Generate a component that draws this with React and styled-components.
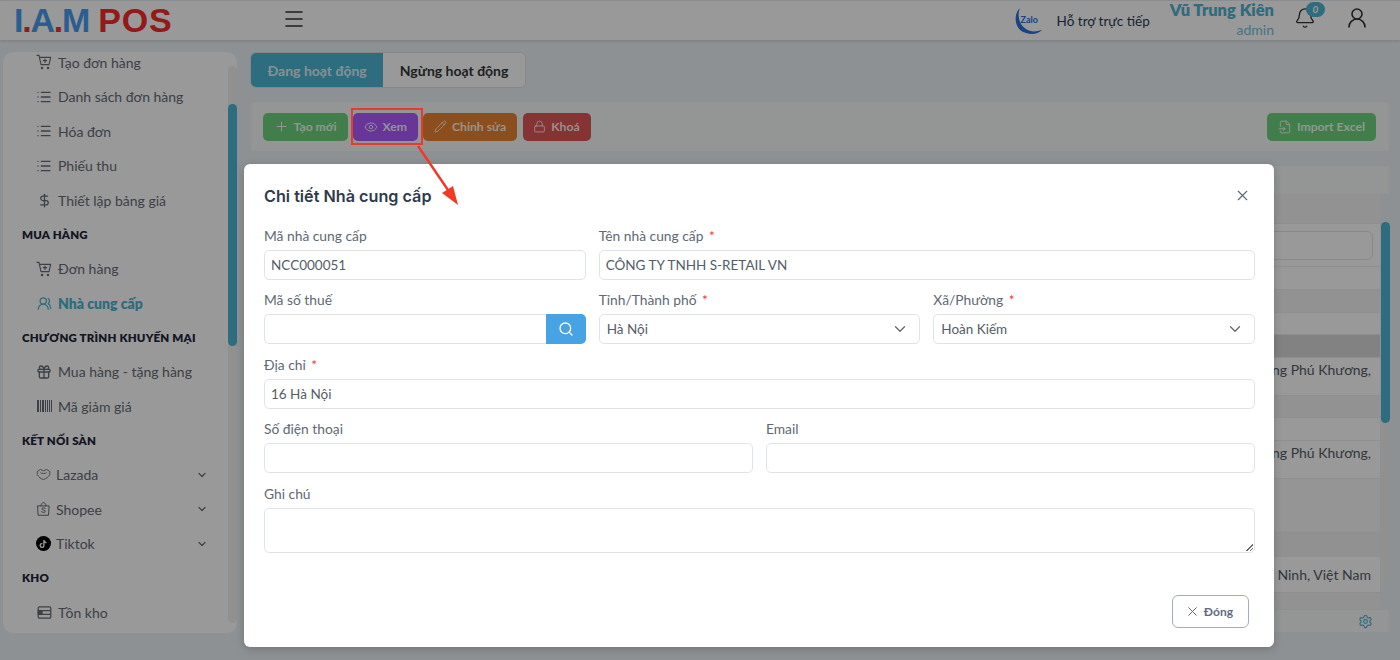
import styled, { createGlobalStyle } from "styled-components";
import {
  Bell,
  ChevronDown,
  DollarSign,
  Eye,
  FileInput,
  Gift,
  List,
  Lock,
  Menu,
  Pencil,
  Plus,
  Search,
  Settings,
  UserRound,
  UsersRound,
  X,
} from "lucide-react";
import { FaTiktok } from "react-icons/fa";

const font = `"Lato", "Noto Sans", sans-serif`;
const teal = "#4db4d2";

function CartIcon() {
  return (
    <svg width="16" height="16" viewBox="0 0 24 24" fill="none" stroke="currentColor" strokeWidth="1.7" strokeLinecap="round" strokeLinejoin="round">
      <circle cx="9" cy="21" r="1" />
      <circle cx="18" cy="21" r="1" />
      <path d="M1.5 2h3l3 14h12l2.5-11H5.5" />
      <path d="M13.5 7.5v5M11 10h5" />
    </svg>
  );
}

function LazadaIcon() {
  return (
    <svg width="15" height="15" viewBox="0 0 24 24" fill="none" stroke="currentColor" strokeWidth="1.4" strokeLinejoin="round">
      <path d="M2 7l5-3 5 2 5-2 5 3v5c-2 4-6 7-10 8-4-1-8-4-10-8z" />
      <path d="M7 9c2 2 8 2 10 0" />
    </svg>
  );
}

function ShopeeIcon() {
  return (
    <svg width="15" height="16" viewBox="0 0 24 24" fill="none" stroke="currentColor" strokeWidth="1.6" strokeLinecap="round" strokeLinejoin="round">
      <path d="M3 7h18l-1 15H4z" />
      <path d="M8 7c0-7 8-7 8 0" />
      <path d="M15 11c-1.500-1.500-6-1.200-5.500 1.200.4 2 5.500 1.300 5.300 3.600-.2 2.200-4.300 2.200-6 .5" />
    </svg>
  );
}

function StockIcon() {
  return (
    <svg width="15" height="15" viewBox="0 0 24 24" fill="none" stroke="currentColor" strokeWidth="2">
      <rect x="2" y="3" width="20" height="18" rx="2" />
      <path d="M2 9h20M2 15h20" />
      <rect x="2" y="9" width="6" height="6" fill="currentColor" />
    </svg>
  );
}

function BarcodeIcon() {
  return (
    <svg width="15" height="14" viewBox="0 0 15 14" fill="currentColor">
      <rect x="0" y="1" width="2" height="12" />
      <rect x="3" y="1" width="1" height="12" />
      <rect x="5" y="1" width="2" height="12" />
      <rect x="8" y="1" width="1" height="12" />
      <rect x="10" y="1" width="1" height="12" />
      <rect x="12" y="1" width="1" height="12" />
      <rect x="14" y="1" width="1" height="12" />
    </svg>
  );
}

const sections = [
  {
    items: [
      { icon: <CartIcon />, label: "Tạo đơn hàng" },
      { icon: <List size={16} />, label: "Danh sách đơn hàng" },
      { icon: <List size={16} />, label: "Hóa đơn" },
      { icon: <List size={16} />, label: "Phiếu thu" },
      { icon: <DollarSign size={15} />, label: "Thiết lập bảng giá" },
    ],
  },
  {
    title: "MUA HÀNG",
    items: [
      { icon: <CartIcon />, label: "Đơn hàng" },
      { icon: <UsersRound size={15} />, label: "Nhà cung cấp", active: true },
    ],
  },
  {
    title: "CHƯƠNG TRÌNH KHUYẾN MẠI",
    items: [
      { icon: <Gift size={16} />, label: "Mua hàng - tặng hàng" },
      { icon: <BarcodeIcon />, label: "Mã giảm giá" },
    ],
  },
  {
    title: "KẾT NỐI SÀN",
    items: [
      { icon: <LazadaIcon />, label: "Lazada", more: true },
      { icon: <ShopeeIcon />, label: "Shopee", more: true },
      { icon: <TiktokBadge><FaTiktok size={8} /></TiktokBadge>, label: "Tiktok", more: true },
    ],
  },
  {
    title: "KHO",
    items: [{ icon: <StockIcon />, label: "Tồn kho" }],
  },
];

export default function App() {
  return (
    <>
      <GlobalStyle />
      <Page>
        <Header>
          <Logo>
            <LogoBlue>
              I<LogoDot>.</LogoDot>A<LogoDot>.</LogoDot>M
            </LogoBlue>
            <LogoRed>POS</LogoRed>
          </Logo>
          <MenuButton>
            <Menu size={24} strokeWidth={1.6} />
          </MenuButton>
          <HeaderRight>
            <Support>
              <ZaloMark>
                <svg width="30" height="30" viewBox="0 0 30 30" fill="#2f6fd8">
                  <path d="M8 2C1 8 2 24 14 27c6 2 12 1 16-3-6 2-12 2-16-1C7 19 5 9 8 2z" />
                </svg>
                <ZaloText>Zalo</ZaloText>
              </ZaloMark>
              <span>Hỗ trợ trực tiếp</span>
            </Support>
            <UserBlock>
              <UserName>Vũ Trung Kiên</UserName>
              <UserRole>admin</UserRole>
            </UserBlock>
            <BellWrap>
              <Bell size={22} strokeWidth={1.5} />
              <BellBadge>0</BellBadge>
            </BellWrap>
            <UserRound size={24} strokeWidth={1.6} />
          </HeaderRight>
        </Header>

        <Body>
          <Sidebar>
            <SideScroll>
              {sections.map((section, i) => (
                <div key={i}>
                  {section.title && <SectionTitle>{section.title}</SectionTitle>}
                  {section.items.map((item) => (
                    <SideItem key={item.label} $active={item.active} $more={item.more}>
                      <SideIcon $more={item.more}>{item.icon}</SideIcon>
                      <SideLabel>{item.label}</SideLabel>
                      {item.more && <ChevronDown size={12} strokeWidth={2.4} />}
                    </SideItem>
                  ))}
                </div>
              ))}
            </SideScroll>
            <ScrollTrack $mt={14} $h={557}>
              <ScrollThumb $top={38} $height={242} />
            </ScrollTrack>
          </Sidebar>

          <Content>
            <Tabs>
              <Tab $active>Đang hoạt động</Tab>
              <Tab>Ngừng hoạt động</Tab>
            </Tabs>
            <Toolbar>
              <ActionButton $bg="#6fd27e">
                <Plus size={15} strokeWidth={1.6} />
                Tạo mới
              </ActionButton>
              <ActionButton $bg="#ae59ff">
                <Eye size={14} strokeWidth={1.6} />
                Xem
              </ActionButton>
              <ActionButton $bg="#e98230">
                <Pencil size={13} strokeWidth={1.6} />
                Chỉnh sửa
              </ActionButton>
              <ActionButton $bg="#df5555">
                <Lock size={13} strokeWidth={1.6} />
                Khoá
              </ActionButton>
              <ToolbarGap />
              <ActionButton $bg="#6fd27e">
                <FileInput size={14} strokeWidth={1.6} />
                Import Excel
              </ActionButton>
            </Toolbar>
            <TableArea>
              <TableBand />
              <TableWrap>
                <TablePanel>
                  <Row $h={30} $shade="#f4f4f4" />
                  <FilterRow>
                    <FilterBox />
                  </FilterRow>
                  <Row $h={23} />
                  <Row $h={23} $shade="#f4f4f4" />
                  <Row $h={22} />
                  <Row $h={23} $shade="#d9d9d9" />
                  <TextRow $h={38} $pt={2}>Phường Phú Khương,</TextRow>
                  <Row $h={22} $shade="#f4f4f4" />
                  <Row $h={23} />
                  <TextRow $h={38} $pt={2}>Phường Phú Khương,</TextRow>
                  <Row $h={54} $shade="#f9f9f9" />
                  <Row $h={24} $shade="#f2f2f2" />
                  <TextRow $h={36} $pt={8}>Tây Ninh, Việt Nam</TextRow>
                  <Row $h={17} $shade="#f4f4f4" />
                </TablePanel>
                <ScrollTrack $mt={28} $h={359}>
                  <ScrollThumb $top={0} $height={201} />
                </ScrollTrack>
              </TableWrap>
              <PagerBar>
                <Settings size={15} strokeWidth={1.8} />
              </PagerBar>
            </TableArea>
          </Content>
        </Body>

        <Overlay />

        <Highlight />
        <Arrow viewBox="0 0 60 80" width="60" height="80">
          <line x1="6" y1="2" x2="36" y2="46" stroke="#ef3a26" strokeWidth="2.4" />
          <polygon points="46,61 30,49 41,42" fill="#ef3a26" />
        </Arrow>

        <Modal>
          <ModalHead>
            <ModalTitle>Chi tiết Nhà cung cấp</ModalTitle>
            <X size={17} strokeWidth={1.6} />
          </ModalHead>
          <FormGrid>
            <Field $span={2}>
              <FieldLabel>Mã nhà cung cấp</FieldLabel>
              <InputBox>NCC000051</InputBox>
            </Field>
            <Field $span={4}>
              <FieldLabel>
                Tên nhà cung cấp <Required>*</Required>
              </FieldLabel>
              <InputBox>CÔNG TY TNHH S-RETAIL VN</InputBox>
            </Field>

            <Field $span={2}>
              <FieldLabel>Mã số thuế</FieldLabel>
              <SearchBox>
                <SearchInput />
                <SearchButton>
                  <Search size={16} strokeWidth={2} />
                </SearchButton>
              </SearchBox>
            </Field>
            <Field $span={2}>
              <FieldLabel>
                Tỉnh/Thành phố <Required>*</Required>
              </FieldLabel>
              <SelectBox>
                Hà Nội
                <ChevronDown size={18} strokeWidth={1.6} />
              </SelectBox>
            </Field>
            <Field $span={2}>
              <FieldLabel>
                Xã/Phường <Required>*</Required>
              </FieldLabel>
              <SelectBox>
                Hoàn Kiếm
                <ChevronDown size={18} strokeWidth={1.6} />
              </SelectBox>
            </Field>

            <Field $span={6}>
              <FieldLabel>
                Địa chỉ <Required>*</Required>
              </FieldLabel>
              <InputBox>16 Hà Nội</InputBox>
            </Field>

            <Field $span={3}>
              <FieldLabel>Số điện thoại</FieldLabel>
              <InputBox />
            </Field>
            <Field $span={3}>
              <FieldLabel>Email</FieldLabel>
              <InputBox />
            </Field>

            <Field $span={6}>
              <FieldLabel>Ghi chú</FieldLabel>
              <NoteBox />
            </Field>
          </FormGrid>
          <ModalFoot>
            <CloseButton>
              <X size={15} strokeWidth={1.6} />
              Đóng
            </CloseButton>
          </ModalFoot>
        </Modal>
      </Page>
    </>
  );
}

function TiktokBadge({ children }) {
  return <TiktokCircle>{children}</TiktokCircle>;
}

const GlobalStyle = createGlobalStyle`
  * {
    box-sizing: border-box;
  }

  body {
    margin: 0;
    font-family: ${font};
    overflow: hidden;
  }
`;

const Page = styled.div`
  position: relative;
  width: 1400px;
  height: 660px;
  background: #edf2f6;
  overflow: hidden;
`;

const Header = styled.header`
  height: 39px;
  margin-top: 1px;
  background: #fff;
  display: flex;
  align-items: center;
  padding: 0 31px 0 14px;
  box-shadow: 0 1px 3px rgba(0, 0, 0, 0.15);
`;

const Logo = styled.div`
  display: flex;
  gap: 9px;
  width: 259px;
  font-family: "Liberation Sans", sans-serif;
  font-size: 34px;
  line-height: 39px;
  font-weight: 700;
`;

const LogoBlue = styled.span`
  color: #4a9cf0;
  letter-spacing: -1.2px;
`;

const LogoDot = styled.span`
  color: #f52c2c;
`;

const LogoRed = styled.span`
  color: #f52c2c;
  letter-spacing: 0.8px;
`;

const MenuButton = styled.div`
  display: flex;
  color: #333;
  margin: 0 0 3px 9px;
`;

const HeaderRight = styled.div`
  margin-left: auto;
  display: flex;
  align-items: center;
  color: #333;

  > svg {
    margin-bottom: 5px;
  }
`;

const Support = styled.div`
  display: flex;
  align-items: center;
  gap: 15px;
  font-size: 13.500px;
  color: #2b3a55;
  margin-right: 20px;
`;

const ZaloMark = styled.div`
  position: relative;
  width: 30px;
  height: 30px;
`;

const ZaloText = styled.span`
  position: absolute;
  left: 9px;
  top: 8px;
  font-size: 9px;
  font-weight: 700;
  color: #2f6fd8;
`;

const UserBlock = styled.div`
  display: flex;
  flex-direction: column;
  align-items: flex-end;
  margin-right: 20px;
`;

const UserName = styled.div`
  font-size: 16.500px;
  line-height: 19px;
  font-weight: 800;
  color: ${teal};
`;

const UserRole = styled.div`
  font-size: 14px;
  line-height: 20px;
  color: #6fc3dc;
`;

const BellWrap = styled.div`
  position: relative;
  display: flex;
  margin: 0 29px 5px 0;
`;

const BellBadge = styled.span`
  position: absolute;
  top: -5px;
  right: -9px;
  width: 19px;
  height: 15px;
  border-radius: 8px;
  background: ${teal};
  color: #fff;
  font-size: 10px;
  font-style: italic;
  font-weight: 700;
  line-height: 15px;
  text-align: center;
`;

const Body = styled.div`
  display: flex;
  align-items: flex-start;
  padding: 12px 10px 0 3px;
  gap: 13px;
`;

const Sidebar = styled.aside`
  position: relative;
  display: flex;
  flex: 0 0 234px;
  height: 581px;
  background: #fff;
  border-radius: 10px;
  overflow: hidden;
`;

const SideScroll = styled.div`
  flex: 1;
  margin-top: -7px;
  padding-left: 19px;
`;

const SectionTitle = styled.div`
  height: 34px;
  line-height: 34px;
  font-size: 11.500px;
  font-weight: 800;
  letter-spacing: 0.2px;
  color: #24263a;
  white-space: nowrap;
`;

const SideItem = styled.div`
  display: flex;
  align-items: center;
  height: 34.500px;
  padding-left: ${(p) => (p.$more ? "13px" : "14px")};
  padding-right: 20px;
  color: ${(p) => (p.$active ? teal : "#666c75")};
  font-weight: ${(p) => (p.$active ? 800 : 400)};
`;

const SideIcon = styled.span`
  display: flex;
  justify-content: center;
  align-items: center;
  width: 16px;
  margin-right: ${(p) => (p.$more ? "5px" : "6px")};
`;

const SideLabel = styled.span`
  flex: 1;
  font-size: 14px;
  white-space: nowrap;
`;

const TiktokCircle = styled.span`
  display: flex;
  align-items: center;
  justify-content: center;
  width: 15px;
  height: 15px;
  border-radius: 50%;
  background: #000;
  color: #fff;
`;

const ScrollTrack = styled.div`
  position: relative;
  flex: 0 0 9px;
  margin-top: ${(p) => p.$mt}px;
  height: ${(p) => p.$h}px;
  background: #f0f0f0;
  border-radius: 5px;
`;

const ScrollThumb = styled.div`
  position: absolute;
  left: 0;
  right: 0;
  top: ${(p) => p.$top}px;
  height: ${(p) => p.$height}px;
  background: #4db5d4;
  border-radius: 5px;
`;

const Content = styled.main`
  flex: 1;
  min-width: 0;
  display: flex;
  flex-direction: column;
`;

const Tabs = styled.div`
  display: flex;
  align-self: flex-start;
  height: 36px;
  background: #fff;
  border-radius: 6px;
  border: 1px solid #e0e0e0;
  overflow: hidden;
`;

const Tab = styled.div`
  display: flex;
  align-items: center;
  padding: 0 16.500px;
  font-size: 14px;
  font-weight: 700;
  color: ${(p) => (p.$active ? "#dff1f6" : "#33363d")};
  background: ${(p) => (p.$active ? "#4db5d4" : "#fff")};
`;

const Toolbar = styled.div`
  display: flex;
  align-items: center;
  gap: 5.500px;
  height: 49px;
  margin: 14px 1px 0 1px;
  padding: 0 13px 0 12px;
  background: #f7f8f9;
  border-radius: 5px;
`;

const ToolbarGap = styled.div`
  flex: 1;
`;

const ActionButton = styled.div`
  display: flex;
  align-items: center;
  gap: 5px;
  height: 28px;
  padding: 0 11px 0 10.500px;
  border-radius: 5px;
  background: ${(p) => p.$bg};
  color: rgba(255, 255, 255, 0.92);
  font-size: 12.200px;
  font-weight: 700;
`;

const TableArea = styled.div`
  display: flex;
  flex-direction: column;
  margin-top: 15px;
  margin-left: 1px;
`;

const TableBand = styled.div`
  height: 28px;
  margin-right: 1px;
  background: #f7f8f9;
`;

const TableWrap = styled.div`
  display: flex;
  height: 416px;
  overflow: hidden;
`;

const TablePanel = styled.div`
  flex: 1;
  margin-right: 1px;
  background: #fff;
`;

const Row = styled.div`
  height: ${(p) => p.$h}px;
  background: ${(p) => p.$shade || "#fff"};
  border-bottom: 1px solid #eeeeee;
`;

const TextRow = styled(Row)`
  display: flex;
  justify-content: flex-end;
  padding: ${(p) => p.$pt}px 9px 0 0;
  font-size: 14px;
  line-height: 20px;
  color: #555c66;
  white-space: nowrap;
`;

const FilterRow = styled.div`
  height: 43px;
  padding: 7px 7px 0 0;
  border-bottom: 1px solid #eeeeee;
  background: #fff;
`;

const FilterBox = styled.div`
  height: 29px;
  border: 1px solid #dfe3e8;
  border-radius: 6px;
`;

const PagerBar = styled.div`
  display: flex;
  justify-content: flex-end;
  align-items: center;
  height: 22px;
  margin-right: 1px;
  padding-right: 16px;
  background: #f7f8f9;
  color: #4db5d4;
`;

const Overlay = styled.div`
  position: absolute;
  inset: 0;
  background: rgba(0, 0, 0, 0.4);
`;

const Highlight = styled.div`
  position: absolute;
  left: 351px;
  top: 108px;
  width: 72px;
  height: 37px;
  border: 2px solid #e63b2e;
`;

const Arrow = styled.svg`
  position: absolute;
  left: 412px;
  top: 144px;
  z-index: 2;
`;

const Modal = styled.div`
  position: absolute;
  left: 244px;
  top: 164px;
  width: 1030px;
  height: 483px;
  display: flex;
  flex-direction: column;
  padding: 0 19px 0 20px;
  background: #fff;
  border-radius: 6px;
  box-shadow: 0 2px 8px rgba(0, 0, 0, 0.2);
`;

const ModalHead = styled.div`
  display: flex;
  align-items: center;
  justify-content: space-between;
  flex: 0 0 62.500px;
  padding: 1px 4px 0 0;
  color: #5c6470;
`;

const ModalTitle = styled.h2`
  margin: 0;
  font-family: "Inter", sans-serif;
  font-size: 16.200px;
  font-weight: 600;
  color: #2f3a4c;
`;

const FormGrid = styled.div`
  display: grid;
  grid-template-columns: repeat(6, 1fr);
  column-gap: 13px;
  row-gap: 11.500px;
`;

const Field = styled.div`
  grid-column: span ${(p) => p.$span};
  display: flex;
  flex-direction: column;
`;

const FieldLabel = styled.label`
  height: 23px;
  font-size: 13.800px;
  line-height: 18px;
  color: #616873;
`;

const Required = styled.span`
  color: #e53935;
  margin-left: 2px;
`;

const InputBox = styled.div`
  display: flex;
  align-items: center;
  height: 30px;
  padding: 0 6px;
  border: 1px solid #dfe3ea;
  border-radius: 5px;
  font-size: 13.500px;
  color: #555c66;
`;

const SearchBox = styled.div`
  display: flex;
  height: 30px;
`;

const SearchInput = styled.div`
  flex: 1;
  border: 1px solid #dfe3ea;
  border-right: 0;
  border-radius: 5px 0 0 5px;
`;

const SearchButton = styled.div`
  display: flex;
  align-items: center;
  justify-content: center;
  width: 40px;
  background: #48a3e4;
  color: #fff;
  border-radius: 0 5px 5px 0;
`;

const SelectBox = styled(InputBox)`
  justify-content: space-between;
  padding: 0 10px 0 7px;

  svg {
    color: #5c6470;
  }
`;

const NoteBox = styled(InputBox)`
  position: relative;
  height: 45px;

  &::after {
    content: "";
    position: absolute;
    right: 1px;
    bottom: 1px;
    width: 7px;
    height: 7px;
    background: linear-gradient(135deg, transparent 50%, #666 50%, #666 60%, transparent 60%, transparent 75%, #666 75%, #666 85%, transparent 85%);
  }
`;

const ModalFoot = styled.div`
  display: flex;
  justify-content: flex-end;
  margin-top: auto;
  padding: 0 6px 19px 0;
`;

const CloseButton = styled.div`
  display: flex;
  align-items: center;
  gap: 4px;
  height: 33px;
  padding: 0 15px 0 12px;
  border: 1.500px solid #a3acbc;
  border-radius: 6px;
  color: #5f6b7d;
  font-size: 12px;
  font-weight: 700;
`;
